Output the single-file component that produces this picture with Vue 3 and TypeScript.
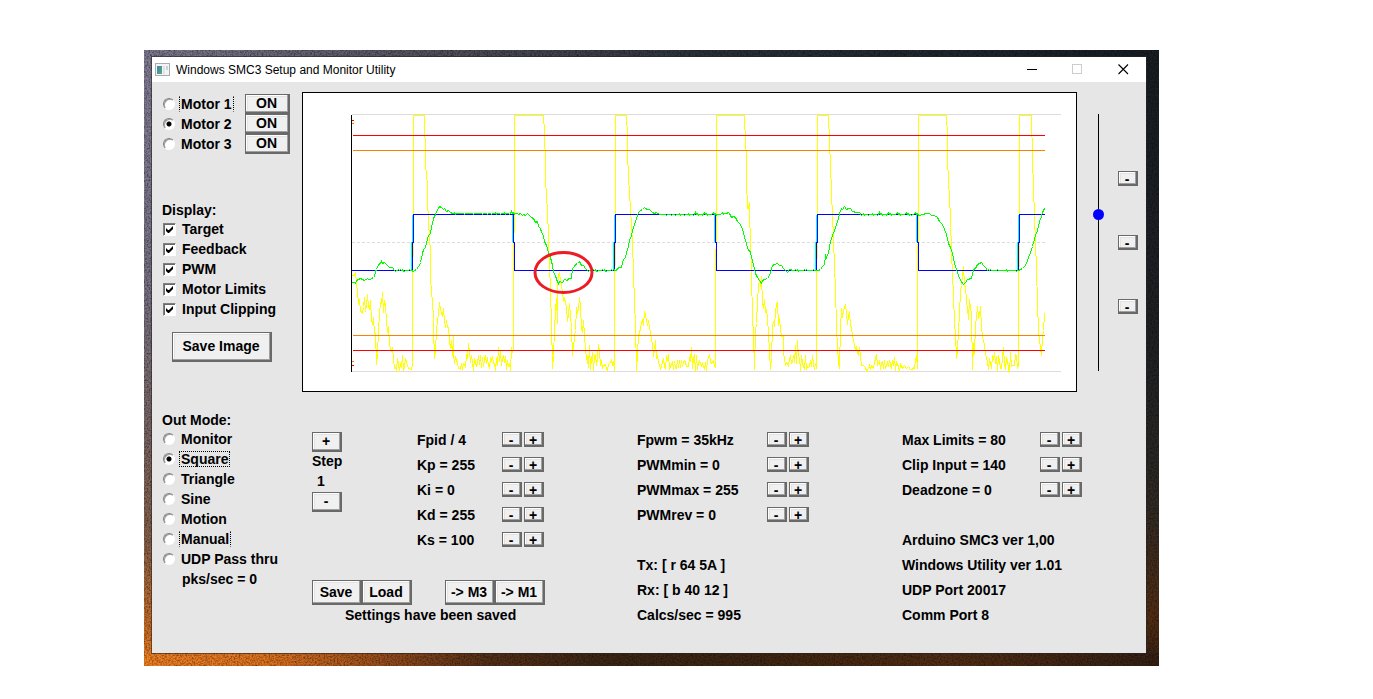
<script setup lang="ts">
import { computed, ref } from 'vue'

interface Param {
  label: string
}

const motors = ['Motor 1', 'Motor 2', 'Motor 3']
const motor = ref('Motor 2')
const modes = ['Monitor', 'Square', 'Triangle', 'Sine', 'Motion', 'Manual', 'UDP Pass thru']
const mode = ref('Square')
const traces = ref([
  { label: 'Target', shown: true },
  { label: 'Feedback', shown: true },
  { label: 'PWM', shown: true },
  { label: 'Motor Limits', shown: true },
  { label: 'Input Clipping', shown: true },
])
const shown = (i: number) => traces.value[i].shown

const setpoint = ref(151)
const step = ref(1)

const gains: Param[] = [
  { label: 'Fpid / 4' },
  { label: 'Kp = 255' },
  { label: 'Ki = 0' },
  { label: 'Kd = 255' },
  { label: 'Ks = 100' },
]
const pwm: Param[] = [
  { label: 'Fpwm = 35kHz' },
  { label: 'PWMmin = 0' },
  { label: 'PWMmax = 255' },
  { label: 'PWMrev = 0' },
]
const limits: Param[] = [
  { label: 'Max Limits = 80' },
  { label: 'Clip Input = 140' },
  { label: 'Deadzone = 0' },
]
const link = ['Tx: [ r 64 5A ]', 'Rx: [ b 40 12 ]', 'Calcs/sec = 995']
const about = ['Arduino SMC3 ver 1,00', 'Windows Utility ver 1.01', 'UDP Port 20017', 'Comm Port 8']

/* Plot units: x is the sample number, y runs down from the top rule (0) to the bottom rule (257). */
const rises = [62, 264, 466, 668]
const falls = [163, 365, 567]
const LOW = 156
const HIGH = 100
const MID = 128
const END = 693

const target = computed(() => {
  let d = `M0 ${LOW}`
  rises.forEach((x, i) => {
    d += `H${x - 1}V${MID}H${x}V${HIGH}`
    const f = falls[i]
    if (f !== undefined) d += `H${f - 1}V${MID}H${f}V${LOW}`
  })
  return d + `H${END}`
})
const edges = computed(
  () =>
    rises.map((x) => `M${x - 2} ${LOW - 1}V${MID}H${x - 1}V${HIGH}`).join('') +
    falls.map((x) => `M${x - 2} ${HIGH}V${MID - 1}`).join(''),
)

const jitter = [0, 0, -1, 0, 1, 0, 0, 1, -1, 0, -1, 0, 0, 1, 0, -2, 0, 0, 1, 0, 0, -1, 0]
function flat(from: number, to: number, base: number): string {
  const out: string[] = []
  for (let x = from; x <= to; x += 1) out.push(`${x},${base + jitter[(x * 5 + (x >> 3)) % jitter.length]}`)
  return out.join(' ')
}

const feedback = [
  '0,168 3,168 4,169 5,166 7,165 9,164 11,165 13,166 16,164 17,165 19,165 20,164 22,163 23,162 24,157 25,155 27,150 29,149 30,147 31,149 33,148 36,151 38,153 41,153 43,156',
  flat(44, 63, 156),
  '65,155 67,152 68,151 69,148 70,144 71,139 72,135 74,133 75,128 77,121 79,119 80,113 82,104 84,100 85,97 87,94 88,92 90,93 92,95 93,94 95,97 97,96 99,98 101,99',
  flat(102, 164, 99),
  '166,99 167,100 169,99 171,101 172,100 174,101 176,99 178,101 180,103 182,104 184,108 186,107 187,112 189,114 190,118 192,121 193,127 195,131 197,138 199,143 201,151 202,158 204,161 205,165 206,167 207,169 208,167 211,168 213,165 216,166 217,164 220,164 221,154 223,152 224,150 226,149 228,147 230,151 232,151 234,154 237,157 240,155',
  flat(241, 262, 156),
  '264,156 266,155 267,153 270,153 272,145 274,143 275,138 277,132 278,126 280,121 282,113 284,107 286,101 287,98 289,96 291,95 293,93 294,94 296,95 298,95 301,98 303,99 305,98 308,100',
  flat(309, 373, 100),
  '375,99 377,98 378,99 380,103 382,102 384,103 386,107 388,109 391,114 392,119 394,126 396,133 397,136 399,137 400,143 402,150 404,159 406,163 408,166 410,169 411,166 413,165 416,164 418,161 419,158 421,151 423,150 426,149 428,151 430,151 432,154 434,156 436,158 438,155 442,156',
  flat(443, 467, 156),
  '469,155 471,152 473,150 474,141 475,143 477,138 479,127 481,121 483,116 485,110 487,104 488,99 490,94 491,95 493,92 495,95 497,94 499,94 501,97 505,98 508,98 510,101',
  flat(511, 570, 100),
  '572,100 574,99 578,99 580,101 583,101 586,103 588,107 591,110 593,115 595,120 597,129 599,133 601,139 603,149 605,155 607,161 609,166 612,170 614,168 616,165 620,164 622,155 624,154 626,150 628,149 630,148 632,151 634,153 636,156',
  flat(637, 667, 156),
  '669,155 671,154 673,152 675,149 677,143 679,138 681,132 682,128 684,121 686,116 688,107 690,102 691,98 693,94',
].join(' ')

const duty = [
  '0,161 3,161 4,159 5,168 6,178 7,188 8,186 9,196 10,198 11,199 12,192 13,183 14,197 15,191 16,180 17,192 18,195 19,186 20,204 21,210 22,203 23,219 24,219 25,250 26,239 27,216 28,200 29,188 30,189 31,178 32,198 33,186 34,190 35,206 36,218 37,212 38,229 39,236 40,237 41,233 42,244 43,254 44,253 45,255 46,244 47,249 48,257 49,249 50,253 51,241 52,256 53,252 54,244 55,248 56,251 57,254 58,254 59,255 60,255 61,251 61,156 62,130 62,1 73,1',
  '73,16 74,30 74,50 75,60 76,70 76,83 77,110 78,120 79,140 79,162 80,178 81,186 82,204 82,214 83,244 84,235 85,216 86,206 87,200 88,188 89,194 90,199 91,202 92,194 93,206 94,213 95,206 96,213 97,213 98,226 99,234 100,226 101,241 102,222 102,240 103,249 104,242 105,246 106,248 107,254 108,254 109,255 110,249 111,255 112,249 113,250 114,252 115,241 116,243 117,229 118,237 119,248 120,241 121,248 122,256 123,244 124,248 125,252 126,248 127,241 128,250 129,241 130,253 131,243 132,252 133,245 134,241 135,249 136,243 137,251 138,254 139,243 140,246 141,242 142,249 143,249 144,256 145,244 146,251 147,233 148,247 149,237 150,251 151,244 152,241 153,248 154,242 155,255 156,246 157,252 158,249 159,256 160,233 161,238 162,233 162,100 163,118 163,1 192,1',
  '193,17 194,51 194,70 195,76 196,103 197,116 197,133 198,146 199,180 200,206 201,254 202,241 203,216 204,196 205,184 206,209 206,170 207,161 208,158 209,166 210,171 211,178 212,187 213,184 214,188 215,193 216,207 217,200 218,189 219,202 220,213 221,241 222,233 223,222 224,216 225,193 226,198 227,195 228,183 229,192 230,215 231,218 232,206 233,220 234,236 236,249 236,242 237,253 238,231 239,255 240,245 241,238 242,256 243,241 244,240 245,251 246,244 247,230 248,237 249,251 250,246 251,254 252,251 254,250 255,255 256,256 257,250 259,248 260,246 261,250 262,247 263,256 263,152 264,150 264,1 275,1',
  '276,22 276,40 277,60 278,80 279,93 280,112 281,128 282,158 283,188 284,210 285,257 286,238 287,222 288,218 289,214 290,208 291,206 292,211 293,197 294,201 295,206 296,211 297,206 298,213 300,223 301,231 302,242 303,235 304,226 305,244 306,241 307,248 309,254 310,252 311,247 312,244 313,253 314,254 315,241 316,246 317,240 318,255 319,252 321,248 322,255 323,247 324,254 325,254 326,246 327,253 328,246 329,253 330,246 331,252 332,247 333,246 334,248 335,252 337,252 338,243 339,247 340,233 341,254 342,243 343,241 344,257 345,241 346,255 347,249 348,247 350,251 351,249 353,255 354,248 355,256 356,246 358,240 359,247 360,249 362,246 363,252 364,253 364,140 365,130 365,1 393,1',
  '394,30 395,40 395,67 396,94 397,94 398,88 398,110 399,117 400,163 401,200 402,222 403,255 404,216 405,209 406,186 407,172 408,165 409,172 410,162 411,188 412,194 413,185 414,198 415,195 416,203 417,219 418,238 419,255 420,243 421,213 422,207 423,212 424,198 425,189 426,188 427,211 428,204 429,214 430,222 432,222 432,238 434,250 435,248 436,249 437,251 438,244 439,241 440,249 441,248 442,241 443,248 444,231 445,249 446,226 447,242 448,243 449,256 450,241 451,248 452,252 453,254 454,241 455,255 456,252 457,253 458,252 459,246 460,252 461,241 462,250 463,255 464,249 465,254 465,150 466,140 466,1 477,1',
  '478,28 479,50 480,79 481,101 482,123 483,154 484,173 485,214 486,231 487,249 488,254 489,213 490,194 491,203 492,196 494,190 495,199 496,210 497,202 498,197 499,211 500,213 501,221 502,226 503,231 504,235 505,233 507,241 508,233 509,242 510,251 512,251 514,253 515,257 517,254 518,251 519,255 520,251 522,254 523,248 525,240 526,251 528,246 529,255 530,248 531,247 532,254 533,246 534,254 536,248 537,252 538,246 540,254 541,246 542,251 543,243 544,256 545,248 547,252 548,257 549,250 551,254 553,251 555,254 557,252 559,255 561,255 562,253 563,254 564,246 565,241 566,254 566,130 567,140 567,1 595,1',
  '596,22 596,45 597,66 598,84 599,103 600,139 601,160 602,180 603,208 604,221 605,244 606,236 607,216 608,199 609,176 610,171 611,161 612,152 613,171 614,173 615,186 616,194 617,205 618,185 619,193 620,199 621,255 622,229 623,239 624,211 625,203 626,192 627,203 628,201 629,192 630,213 631,222 633,231 634,239 636,248 637,255 638,244 640,254 641,241 642,245 643,238 644,249 645,242 646,257 647,241 648,246 649,254 650,254 651,243 652,233 653,249 654,255 655,243 656,246 657,255 658,257 659,238 660,252 661,251 663,251 664,240 665,241 666,254 667,250 667,156 668,150 668,1 680,1',
  '681,44 682,74 683,101 684,129 685,154 686,189 687,216 689,234 690,241 691,223 692,216 693,199',
].join(' ')
</script>

<template>
  <div class="desktop">
    <svg class="grain" aria-hidden="true">
      <filter id="grain">
        <feTurbulence type="fractalNoise" baseFrequency="0.6" numOctaves="2" seed="4" />
        <feColorMatrix values="0 0 0 0 0  0 0 0 0 0  0 0 0 0 0  1 0 0 0 -0.38" />
      </filter>
      <rect width="100%" height="100%" filter="url(#grain)" />
    </svg>
    <main class="window">
      <header class="titlebar">
        <svg class="app-icon" width="16" height="14" viewBox="0 0 16 14" aria-hidden="true">
          <defs>
            <linearGradient id="pane" x1="0" y1="0" x2="1" y2="1">
              <stop offset="0" stop-color="#4a7fb5" />
              <stop offset="1" stop-color="#4fae7c" />
            </linearGradient>
          </defs>
          <rect x="0.5" y="0.5" width="14" height="12" fill="#f4f4f4" stroke="#a9adb2" />
          <rect x="2" y="3" width="5" height="8" fill="url(#pane)" />
          <rect x="8" y="3" width="2" height="8" fill="#dfe3e6" />
          <rect x="11" y="3" width="2" height="4" fill="#c9d3da" />
        </svg>
        <h1>Windows SMC3 Setup and Monitor Utility</h1>
        <button class="caption" aria-label="Minimize">
          <svg width="11" height="11" viewBox="0 0 11 11"><path d="M1 5.5H11" stroke="#000" /></svg>
        </button>
        <button class="caption" aria-label="Maximize" disabled>
          <svg width="11" height="11" viewBox="0 0 11 11"><rect x="0.5" y="0.5" width="9" height="9" fill="none" stroke="#ccc" /></svg>
        </button>
        <button class="caption" aria-label="Close">
          <svg width="11" height="11" viewBox="0 0 11 11"><path d="M0.5 0.5L10 10M10 0.5L0.5 10" stroke="#000" stroke-width="1.1" /></svg>
        </button>
      </header>

      <section class="monitor">
        <div class="side">
          <div v-for="m in motors" :key="m" class="motor">
            <label class="choice">
              <input v-model="motor" type="radio" name="motor" :value="m" />
              <span class="caption-text" :class="{ sides: m === 'Motor 1' }">{{ m }}</span>
            </label>
            <button class="btn on" :aria-label="`${m} on`">ON</button>
          </div>
          <h2 class="display-title">Display:</h2>
          <label v-for="t in traces" :key="t.label" class="choice">
            <span class="tick">
              <input v-model="t.shown" type="checkbox" />
              <svg v-if="t.shown" width="7" height="7" viewBox="0 0 7 7" aria-hidden="true"><path d="M0 2V5L2 7H3L7 3V0L3 4H2Z" /></svg>
            </span>
            <span class="caption-text">{{ t.label }}</span>
          </label>
          <button class="btn save-image">Save Image</button>
        </div>

        <figure class="chart">
          <svg viewBox="-48.5 -21.5 773 298" role="img" aria-label="Motor response plot">
            <g fill="none" shape-rendering="crispEdges">
              <path d="M0 0H709M0 257H709" stroke="#dcdcdc" />
              <path :d="`M0.5 128H${END}`" stroke="#dcdcdc" stroke-dasharray="3 2" />
              <polyline v-if="shown(2)" :points="duty" stroke="#ffff00" />
              <path v-if="shown(0)" :d="edges" stroke="#00ffff" />
              <path v-if="shown(0)" :d="target" stroke="#0000ff" />
              <polyline v-if="shown(1)" :points="feedback" stroke="#00ff00" />
              <path v-if="shown(3)" :d="`M1 21H${END}M1 236H${END}M0 6H2M0 251H2`" stroke="#ff0000" />
              <path v-if="shown(4)" :d="`M1 36H${END}M1 221H${END}M0 9H2M0 247H2`" stroke="#ff8000" />
              <path d="M0 0V257" stroke="#000" />
            </g>
            <ellipse cx="212" cy="158" rx="28.5" ry="20" fill="none" stroke="#ed1c24" stroke-width="3" />
          </svg>
        </figure>

        <div class="manual">
          <input v-model.number="setpoint" class="slider" type="range" min="0" max="246" aria-label="Manual target" />
          <div class="presets">
            <button v-for="n in 3" :key="n" class="btn small" :aria-label="`Preset ${n}`">-</button>
          </div>
        </div>
      </section>

      <section class="settings">
        <div class="side">
          <h2>Out Mode:</h2>
          <label v-for="m in modes" :key="m" class="choice">
            <input v-model="mode" type="radio" name="mode" :value="m" />
            <span class="caption-text" :class="{ focus: m === 'Square', sides: m === 'Manual' }">{{ m }}</span>
          </label>
          <p class="rate">pks/sec = 0</p>
        </div>

        <div class="tuning">
          <div class="step">
            <button class="btn" aria-label="Increase step" @click="step++">+</button>
            <span>Step</span>
            <output>{{ step }}</output>
            <button class="btn" aria-label="Decrease step" @click="step--">-</button>
          </div>
          <div class="rows gains">
            <div v-for="p in gains" :key="p.label" class="row">
              <span>{{ p.label }}</span>
              <button class="btn small" :aria-label="`Decrease ${p.label}`">-</button>
              <button class="btn small" :aria-label="`Increase ${p.label}`">+</button>
            </div>
          </div>
          <div class="files">
            <div class="pair">
              <button class="btn">Save</button>
              <button class="btn">Load</button>
            </div>
            <div class="pair">
              <button class="btn">-&gt; M3</button>
              <button class="btn">-&gt; M1</button>
            </div>
            <p class="status">Settings have been saved</p>
          </div>
        </div>

        <div class="rows pwm">
          <div v-for="p in pwm" :key="p.label" class="row">
            <span>{{ p.label }}</span>
            <button class="btn small" :aria-label="`Decrease ${p.label}`">-</button>
            <button class="btn small" :aria-label="`Increase ${p.label}`">+</button>
          </div>
          <div class="rows info">
            <p v-for="t in link" :key="t" class="row">{{ t }}</p>
          </div>
        </div>

        <div class="rows limits">
          <div v-for="p in limits" :key="p.label" class="row">
            <span>{{ p.label }}</span>
            <button class="btn small" :aria-label="`Decrease ${p.label}`">-</button>
            <button class="btn small" :aria-label="`Increase ${p.label}`">+</button>
          </div>
          <div class="rows info">
            <p v-for="t in about" :key="t" class="row">{{ t }}</p>
          </div>
        </div>
      </section>
    </main>
  </div>
</template>

<style>
body {
  background: #fff;
}
</style>

<style scoped>
* {
  box-sizing: border-box;
}
h1,
h2,
p,
figure {
  margin: 0;
}
.desktop {
  position: relative;
  margin: 50px 214px 0 144px;
  padding: 7px 13px 13px 8px;
  background:
    linear-gradient(to right, #f08024 0, #e07420 120px, #964c1c 240px, #553018 340px, #3c2614 460px, #402612 620px, #522e14 800px, #362014 100%) bottom / 100% 13px no-repeat,
    linear-gradient(to right, #7c788e 0, #504f5a 30%, #2c323a 55%, #181e24 100%) top / 100% 7px no-repeat,
    linear-gradient(to bottom, #837e96 0, #787183 40%, #786664 62%, #86604a 80%, #d07024 95%, #f08024 100%) left / 8px 100% no-repeat,
    linear-gradient(to bottom, #181e24 0, #202326 50%, #322b24 75%, #522e14 92%, #362014 100%) right / 13px 100% no-repeat;
}
.grain {
  position: absolute;
  inset: 0;
  width: 100%;
  height: 100%;
}
.window {
  position: relative;
  background: #e6e6e6;
  color: #000;
  font: 700 14px/20px "Liberation Sans", Arial, sans-serif;
  box-shadow: 0 0 0 1px rgba(40, 36, 36, 0.6);
  padding-bottom: 28px;
}
.titlebar {
  display: flex;
  align-items: center;
  height: 25px;
  padding-left: 3px;
  background: #fff;
}
.titlebar h1 {
  flex: 1;
  margin-left: 5px;
  font: 400 12px/20px "Liberation Sans", Arial, sans-serif;
}
.caption {
  display: flex;
  justify-content: center;
  align-items: center;
  width: 46px;
  height: 25px;
  padding: 0;
  border: 0;
  background: none;
}
.monitor {
  display: grid;
  grid-template-columns: 140px 1fr 59px;
  padding: 10px 10px 0;
}
.side {
  display: flex;
  flex-direction: column;
}
.side h2,
.choice {
  font: inherit;
}
.monitor .side {
  padding-top: 2px;
}
.motor {
  display: flex;
  justify-content: space-between;
  padding-right: 12px;
}
.choice {
  display: flex;
  align-items: center;
  height: 20px;
}
.caption-text {
  padding: 0 1px;
  border: 1px solid transparent;
  line-height: 14px;
}
.focus {
  border: 1px dotted #000;
}
.sides {
  border-left: 1px dotted #000;
  border-right: 1px dotted #000;
}
.choice > input {
  margin: 0 4px 0 1px;
}
input[type='radio'] {
  appearance: none;
  width: 12px;
  height: 12px;
  border: 1px solid;
  border-color: #808080 #fff #fff #808080;
  border-radius: 50%;
  background: #fff;
  box-shadow: inset 1px 1px 0 #a0a0a0;
}
input[type='radio']:checked {
  background: radial-gradient(circle at 5px 5px, #000 0 2px, #fff 3px);
}
.tick {
  display: grid;
  place-items: center;
  margin: 0 4px 0 1px;
}
.tick > * {
  grid-area: 1 / 1;
}
.tick svg {
  pointer-events: none;
}
input[type='checkbox'] {
  appearance: none;
  width: 13px;
  height: 13px;
  margin: 0;
  border: 1px solid;
  border-color: #808080 #fff #fff #808080;
  background: #fff;
  box-shadow: inset 1px 1px 0 #696969;
}
.display-title {
  margin-top: 46px;
}
.side h2 {
  height: 19px;
}
.btn {
  padding: 0 2px 2px 0;
  border: 1px solid #696969;
  background: #f0f0f0;
  box-shadow:
    inset -1px -1px 0 #696969,
    inset -2px -2px 0 #a0a0a0,
    inset 1px 1px 0 #fff,
    inset 2px 2px 0 #e3e3e3;
  color: #000;
  font: inherit;
  line-height: 1;
  text-align: center;
  white-space: nowrap;
}
.on {
  width: 45px;
  height: 20px;
}
.save-image {
  align-self: start;
  width: 100px;
  height: 30px;
  margin: 13px 0 0 10px;
}
.small {
  width: 20px;
  height: 15px;
}
.chart {
  align-self: start;
  border: 1px solid #000;
  background: #fff;
}
.chart svg {
  display: block;
  width: 100%;
}
.manual {
  display: flex;
  justify-content: space-between;
  padding: 22px 0 0 16px;
  margin-right: -2px;
}
.slider {
  appearance: none;
  writing-mode: vertical-lr;
  direction: rtl;
  width: 11px;
  height: 257px;
  margin: 0;
  background: linear-gradient(#000, #000) center / 1px 100% no-repeat;
}
.slider::-webkit-slider-thumb {
  appearance: none;
  width: 11px;
  height: 11px;
  border-radius: 50%;
  background: #00f;
}
.presets {
  display: grid;
  align-content: start;
  gap: 49px;
  padding-top: 57px;
}
.settings {
  display: grid;
  grid-template-columns: 150px 325fr 265fr 244fr;
  padding: 18px 0 0 10px;
}
.rate {
  padding-left: 20px;
}
.tuning {
  display: grid;
  grid-template-columns: 105fr 220fr;
  align-content: start;
  padding-top: 22px;
}
.step {
  display: grid;
  grid-template-rows: repeat(4, 20px);
  align-content: start;
  justify-items: start;
}
.step .btn {
  width: 30px;
}
.step span {
  line-height: 18px;
}
.step output {
  padding-left: 5px;
  line-height: 18px;
}
.rows {
  display: grid;
  align-content: start;
  gap: 10px;
}
.row {
  display: flex;
  gap: 2px;
  height: 15px;
  line-height: 17px;
  white-space: nowrap;
}
.gains .row span {
  width: 83px;
}
.pwm .row span {
  width: 128px;
}
.limits .row span {
  width: 136px;
}
.pwm,
.limits {
  padding-top: 22px;
}
.info {
  margin-top: 25px;
}
.files {
  grid-column: 1 / -1;
  display: flex;
  flex-wrap: wrap;
  gap: 0 33px;
  margin-top: 33px;
}
.pair {
  display: flex;
}
.pair .btn {
  width: 50px;
  height: 25px;
}
.status {
  width: 100%;
  padding-left: 33px;
}
</style>
